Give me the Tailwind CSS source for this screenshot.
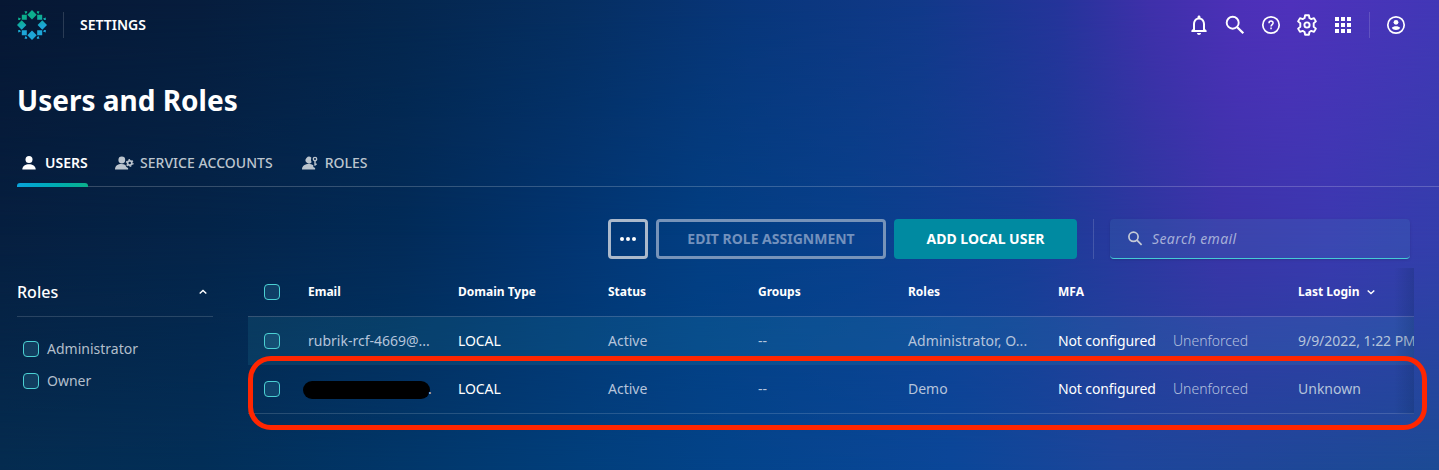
<!DOCTYPE html>
<html lang="en">
<head>
<meta charset="utf-8">
<title>Users and Roles</title>
<script src="https://cdn.jsdelivr.net/npm/@tailwindcss/browser@4"></script>
</head>
<body class="relative h-[470px] w-[1439px] overflow-hidden bg-[#04366f] font-['Noto_Sans',sans-serif] text-white">
<!-- Backdrop: three horizontal ramps faded into each other vertically -->
<div class="absolute inset-0 bg-[linear-gradient(90deg,#052c50_0px,#032f58_200px,#02376a_400px,#023f7c_580px,#04448b_730px,#0b4799_950px,#1d469b_1120px,#1f4799_1250px,#1c4b95_1439px)]"></div>
<div class="absolute inset-0 bg-[linear-gradient(90deg,#061f40_0px,#042449_200px,#022b58_400px,#023470_560px,#023e82_700px,#08408c_850px,#173d95_1020px,#2b389f_1130px,#3b34a9_1220px,#3b38b0_1330px,#343eac_1439px)] [mask-image:linear-gradient(180deg,#000_50%,transparent_100%)]"></div>
<div class="absolute inset-0 bg-[linear-gradient(90deg,#061733_0px,#061d3d_200px,#04264d_400px,#052e60_570px,#08367a_750px,#113989_920px,#25349a_1060px,#3f30aa_1150px,#4d30b8_1240px,#4f31bb_1290px,#4237b6_1439px)] [mask-image:linear-gradient(180deg,#000_0%,transparent_50%)]"></div>

<div class="relative flex h-full flex-col">
  <header class="flex h-[50px] items-center pl-[17px] pr-[31px]">
    <svg class="size-[30px]" viewBox="0 0 30 30">
      <defs><linearGradient id="lg" x1="8" y1="0" x2="16" y2="30" gradientUnits="userSpaceOnUse"><stop offset=".3" stop-color="#0cae8d"/><stop offset=".65" stop-color="#1da6d8"/></linearGradient></defs>
      <g fill="url(#lg)">
        <path d="M15 0l4.700 4.700L15 9.400l-4.700-4.700zM15 20.600l4.700 4.700L15 30l-4.700-4.700zM4.700 10.300L9.400 15l-4.700 4.700L0 15zM25.300 10.300L30 15l-4.700 4.700-4.700-4.700z"/>
        <path d="M4.800 4.800h5v5h-5zM20.200 4.800h5v5h-5zM4.800 20.200h5v5h-5zM20.200 20.200h5v5h-5z"/>
        <path d="M7.500 1.200h2.600v1.600L8.500 4zM1.200 7.500v2.600h1.600L4 8.500zM22.500 1.200h-2.600v1.600L21.500 4zM28.800 7.500v2.600h-1.600L26 8.500zM7.500 28.800h2.600v-1.600L8.500 26zM1.200 22.500v-2.600h1.600L4 21.500zM22.500 28.800h-2.600v-1.600l1.600-1.200zM28.800 22.500v-2.600h-1.600L26 21.500z"/>
      </g>
    </svg>
    <div class="ml-4 h-[26px] w-px bg-white/15"></div>
    <span class="ml-4 text-[14px] leading-5 font-semibold">SETTINGS</span>
    <div class="ml-auto flex items-center gap-3">
      <svg class="size-6" viewBox="0 0 24 24" fill="#fff"><path d="M12 22c1.100 0 2-.9 2-2h-4c0 1.100.9 2 2 2zm6-6v-5c0-3.070-1.630-5.640-4.500-6.320V4c0-.83-.67-1.500-1.500-1.500s-1.500.67-1.500 1.500v.68C7.640 5.360 6 7.920 6 11v5l-1.600 1.600V19h15.200v-1.400zm-2 1H8v-6c0-2.480 1.510-4.500 4-4.500s4 2.020 4 4.500v6z"/></svg>
      <svg class="size-6" viewBox="0 0 24 24" fill="none" stroke="#fff" stroke-width="1.900"><circle cx="9.700" cy="9.700" r="6"/><path d="M14 14l6.300 6.300" stroke-width="2.300"/></svg>
      <svg class="size-6" viewBox="0 0 24 24"><circle cx="12" cy="12" r="8.200" fill="none" stroke="#fff" stroke-width="1.700"/><path d="M10 10.200c0-2.900 4.200-2.700 4.100-.2 0 1.500-2.050 1.700-2.050 3.400M12.050 14.600v1.700" fill="none" stroke="#fff" stroke-width="1.500"/></svg>
      <svg class="size-6" viewBox="0 0 24 24" fill="none" stroke="#fff" stroke-width="1.900" stroke-linejoin="round"><path d="M10.100 2.200h3.800l.5 2.800 1.900 1.100 2.700-1 1.900 3.300-2.200 1.900v3.400l2.200 1.900-1.900 3.300-2.700-1-1.900 1.100-.5 2.800h-3.800l-.5-2.800-1.900-1.100-2.700 1-1.900-3.300 2.200-1.900v-3.400L3.100 8.400 5 5.100l2.700 1L9.600 5z"/><circle cx="12" cy="12" r="2.600"/></svg>
      <svg class="size-6" viewBox="0 0 24 24" fill="#fff"><path d="M4 4h4v4H4zM10 4h4v4h-4zM16 4h4v4h-4zM4 10h4v4H4zM10 10h4v4h-4zM16 10h4v4h-4zM4 16h4v4H4zM10 16h4v4h-4zM16 16h4v4h-4z"/></svg>
      <div class="mx-[2px] h-[26px] w-px bg-white/15"></div>
      <svg class="size-6" viewBox="0 0 24 24"><circle cx="12" cy="12" r="8.200" fill="none" stroke="#fff" stroke-width="1.700"/><circle cx="12" cy="9.300" r="2.400" fill="#fff"/><path d="M7.800 14.700c1.400-2.100 7-2.100 8.400 0-1.400 2.900-7 2.900-8.400 0z" fill="#fff"/></svg>
    </div>
  </header>

  <h1 class="mt-[30px] pl-[17px] text-[28px] leading-10 font-bold">Users and Roles</h1>

  <nav class="ml-[17px] mt-[19px] flex h-12 border-b border-white/20 text-[14px] leading-5 text-[#bcc5ce]">
    <div class="relative flex w-[71px] items-center gap-2 pl-1 font-semibold text-white">
      <svg class="size-4 shrink-0" viewBox="0 0 16 16" fill="currentColor"><circle cx="8" cy="4.500" r="3.500"/><path d="M1.300 14.500c0-7 13.400-7 13.400 0z"/></svg>
      <span>USERS</span>
      <div class="absolute inset-x-0 -bottom-px h-1 rounded-t-[3px] bg-linear-to-r from-[#0ba3dc] to-[#0cb08b]"></div>
    </div>
    <div class="ml-[27px] flex items-center gap-1.5 font-medium">
      <svg class="h-4 w-[19px] shrink-0" viewBox="0 0 19 16" fill="currentColor"><circle cx="6.800" cy="5" r="3.400"/><path d="M0 14.500c0-6 7-6.500 10.500-4.500.2 1.500 1 2.300 2.600 2.900v1.600z"/><circle cx="14.700" cy="8" r="2.100" fill="none" stroke="currentColor" stroke-width="1.700"/><circle cx="14.700" cy="8" r="3.300" fill="none" stroke="currentColor" stroke-width="1.200" stroke-dasharray="1.730"/></svg>
      <span class="tracking-[0.04px]">SERVICE ACCOUNTS</span>
    </div>
    <div class="ml-[29px] flex items-center gap-1.5 font-medium">
      <svg class="h-4 w-[17px] shrink-0" viewBox="0 0 17 16" fill="currentColor"><path d="M9.400 2.700a3.400 3.400 0 1 0 .4 4.400C8.800 6 8.700 4 9.400 2.700zM0 14.500c0-6 8-6.500 11.300-4.200v1.600l1.800 1v1.600z"/><circle cx="13" cy="4" r="1.700" fill="none" stroke="currentColor" stroke-width="1.300"/><path d="M12.300 5.500h1.400v5.300h-1.400zM13 8.400h1.700v1.500H13z"/></svg>
      <span>ROLES</span>
    </div>
  </nav>

  <div class="mt-8 flex h-10 justify-end pr-[29px] text-[14px] leading-5 font-bold">
    <button class="flex w-10 items-center justify-center gap-0.5 rounded-[4px] border-3 border-[#abb9cb]"><i class="size-1 rounded-full bg-white"></i><i class="size-1 rounded-full bg-white"></i><i class="size-1 rounded-full bg-white"></i></button>
    <button class="ml-2 w-[230px] rounded-[4px] border-3 border-[#7793b9] text-[#7391bd]">EDIT ROLE ASSIGNMENT</button>
    <button class="ml-2 w-[183px] rounded-[4px] bg-[#008aa1]">ADD LOCAL USER</button>
    <div class="ml-4 w-px bg-white/15"></div>
    <div class="ml-4 flex w-[300px] items-center rounded-[4px] border-b border-[#45cbd5] bg-[#45a0c0]/15 pl-4 font-normal text-[#a5afd8] italic shadow-sm">
      <svg class="size-[18px] text-[#c5cbd6]" viewBox="0 0 18 18" fill="none" stroke="currentColor" stroke-width="1.700"><circle cx="7.500" cy="6.800" r="4.600"/><path d="M10.900 10.200l4.700 4.700"/></svg>
      <span class="ml-2 tracking-[0.4px]">Search email</span>
    </div>
  </div>

  <main class="mt-[9px] flex pl-[17px]">
    <aside class="w-[196px]">
      <div class="flex h-[49px] items-center justify-between border-b border-white/15 pr-[5px] text-[16px] font-medium"><span>Roles</span>
        <svg class="size-[10px]" viewBox="0 0 10 10" fill="none" stroke="#fff" stroke-width="1.400"><path d="M1.700 6.500L5 3.400l3.300 3.100"/></svg></div>
      <div class="mt-4 flex h-8 items-center gap-2 pl-1.5 text-[14px] text-[#b3bfcb]"><i class="size-4 rounded-[4px] border border-[#4bd0d3] bg-[#5bc0dc]/15"></i><span class="pb-0.5">Administrator</span></div>
      <div class="flex h-8 items-center gap-2 pl-1.5 text-[14px] text-[#b3bfcb]"><i class="size-4 rounded-[4px] border border-[#4bd0d3] bg-[#5bc0dc]/15"></i><span class="pb-0.5">Owner</span></div>
    </aside>
    <section class="relative ml-[35px] w-[1166px] overflow-hidden text-[14px] whitespace-nowrap text-[#b5c4db]">
      <div class="grid h-[49px] grid-cols-[60px_150px_150px_150px_150px_150px_240px_116px] items-center border-b border-white/20 text-[12px] font-bold text-white">
        <i class="ml-4 size-4 rounded-[4px] border border-[#4bd0d3] bg-[#5bc0dc]/15"></i>
        <span>Email</span><span>Domain Type</span><span>Status</span><span>Groups</span><span>Roles</span><span>MFA</span>
        <span class="flex items-center gap-[7px]">Last Login <svg class="size-[10px]" viewBox="0 0 10 10" fill="none" stroke="#fff" stroke-width="1.400"><path d="M1.700 3.500L5 6.600l3.300-3.100"/></svg></span>
      </div>
      <div class="grid h-12 grid-cols-[60px_150px_150px_150px_150px_150px_115px_125px_116px] items-center bg-[#38b6c8]/12 [&>span]:pb-0.5">
        <i class="ml-4 size-4 rounded-[4px] border border-[#4bd0d3] bg-[#5bc0dc]/15"></i>
        <span>rubrik-rcf-4669@...</span><span class="tracking-[-0.1px] text-white">LOCAL</span><span>Active</span><span>--</span><span class="tracking-[0.08px]">Administrator, O...</span><span class="tracking-[-0.12px] text-white">Not configured</span><span class="font-light text-[#b4c0df]">Unenforced</span><span class="tracking-[-0.04px]">9/9/2022, 1:22 PM</span>
      </div>
      <div class="grid h-[49px] grid-cols-[60px_150px_150px_150px_150px_150px_115px_125px_116px] items-center border-b border-white/15 [&>span]:pb-0.5">
        <i class="ml-4 size-4 rounded-[4px] border border-[#4bd0d3] bg-[#5bc0dc]/15"></i>
        <span class="-ml-[5px] flex items-center"><i class="mt-1 h-[18px] w-[127px] rounded-full bg-black"></i><span class="-ml-[2px]">.</span></span><span class="tracking-[-0.1px] text-white">LOCAL</span><span>Active</span><span>--</span><span>Demo</span><span class="tracking-[-0.12px] text-white">Not configured</span><span class="font-light text-[#b4c0df]">Unenforced</span><span>Unknown</span>
      </div>
      <div class="pointer-events-none absolute inset-y-0 right-0 w-5 bg-linear-to-r from-transparent to-[#08224a]/20"></div>
    </section>
  </main>
</div>
<!-- Highlight around the second row -->
<div class="pointer-events-none absolute left-[248px] top-[356px] h-[74px] w-[1179px] rounded-[23px] border-5 border-[#ff2600]"></div>
</body>
</html>
